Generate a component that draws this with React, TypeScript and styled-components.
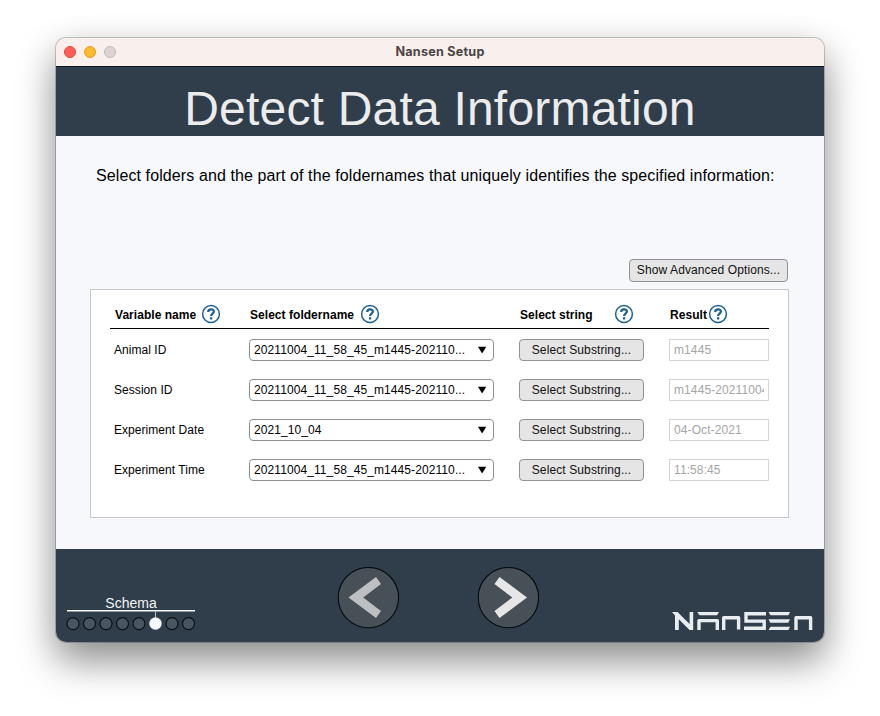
import React from "react";
import styled, { createGlobalStyle } from "styled-components";

const GlobalStyle = createGlobalStyle`
  * { box-sizing: border-box; }
  body {
    margin: 0;
    background: #fff;
    font-family: "Liberation Sans", Arial, sans-serif;
    color: #000;
  }
`;

const Desktop = styled.div`
  width: 880px;
  height: 716px;
  padding: 38px 56px 74px;
  overflow: hidden;
`;

const Window = styled.main`
  width: 768px;
  height: 604px;
  display: flex;
  flex-direction: column;
  border-radius: 10px;
  overflow: hidden;
  background: #f6f8fc;
  box-shadow: 0 0 0 1px rgba(0, 0, 0, 0.2), 0 20px 38px rgba(0, 0, 0, 0.38), 0 8px 36px rgba(0, 0, 0, 0.12);
`;

const TitleBar = styled.header`
  height: 29px;
  flex: none;
  display: grid;
  grid-template-columns: 100px 1fr 100px;
  align-items: center;
  padding: 0 8px;
  background: #f9f0ee;
  border-bottom: 1px solid #0b1220;
`;

const Lights = styled.div`
  display: flex;
  gap: 8px;
`;

const Light = styled.span<{ $fill: string; $edge: string }>`
  width: 12px;
  height: 12px;
  border-radius: 50%;
  background: ${(p) => p.$fill};
  border: 1px solid ${(p) => p.$edge};
`;

const WindowTitle = styled.div`
  font: bold 12.6px/16px Inter, sans-serif;
  letter-spacing: 0.24px;
  text-align: center;
  color: #494443;
`;

const Banner = styled.div`
  height: 69px;
  flex: none;
  background: #303e4b;
  text-align: center;
  padding-top: 14px;
`;

const Heading = styled.h1`
  margin: 0;
  font-size: 48px;
  font-weight: 400;
  line-height: 55px;
  letter-spacing: 0.2px;
  white-space: nowrap;
  color: #ececec;
`;

const Body = styled.section`
  height: 413px;
  flex: none;
  display: flex;
  flex-direction: column;
  padding: 30px 35px 0 34px;
`;

const Instruction = styled.p`
  margin: 0;
  height: 93px;
  padding-left: 6px;
  font-size: 16px;
  line-height: 19px;
  letter-spacing: 0.1px;
  white-space: nowrap;
`;

const Button = styled.button<{ $width: number; $height: number }>`
  width: ${(p) => p.$width}px;
  height: ${(p) => p.$height}px;
  padding: 0 0 ${(p) => (p.$height > 22 ? 2 : 0)}px;
  border: 1px solid #929294;
  border-radius: 4px;
  background: #e5e5e5;
  color: #111;
  font: 12px/18px "Liberation Sans", Arial, sans-serif;
  letter-spacing: 0.11px;
  white-space: nowrap;
`;

const Actions = styled.div`
  display: flex;
  justify-content: flex-end;
  padding-right: 1px;
`;

const Panel = styled.div`
  width: 699px;
  height: 229px;
  margin-top: 7px;
  padding: 10px 19px;
  border: 1px solid #c6c8cb;
  background: #fff;
`;

const columns = `
  display: grid;
  grid-template-columns: 139px 270px 150px 100px;
`;

const HeadRow = styled.div`
  ${columns}
  height: 29px;
  border-bottom: 1px solid #000;
`;

const HeadCell = styled.div<{ $inset: number; $label: number }>`
  display: grid;
  grid-template-columns: ${(p) => p.$label}px 20px;
  height: 28px;
  padding: 4px 0 0 ${(p) => p.$inset}px;
  font-size: 12px;
  line-height: 22px;
  font-weight: bold;
  letter-spacing: 0.04px;
  white-space: nowrap;
`;

const Rows = styled.div`
  display: grid;
  gap: 18px;
  padding-top: 10px;
`;

const Row = styled.div`
  ${columns}
  height: 22px;
  font-size: 12px;
  line-height: 22px;
  letter-spacing: 0.05px;
  white-space: nowrap;
`;

const Variable = styled.div`
  padding-left: 4px;
`;

const Select = styled.div`
  width: 245px;
  height: 22px;
  display: flex;
  justify-content: space-between;
  align-items: center;
  padding: 0 6px 0 4px;
  line-height: 20px;
  letter-spacing: 0.09px;
  border: 1px solid #8f9092;
  border-radius: 4px;
  background: #fff;
`;

const Result = styled.div`
  width: 100px;
  height: 22px;
  padding: 0 4px;
  border: 1px solid #d5d5d5;
  line-height: 20px;
  letter-spacing: 0.1px;
  color: #a5a5a5;
`;

const ResultText = styled.div`
  overflow: hidden;
`;

const Footer = styled.footer`
  flex: 1;
  display: grid;
  grid-template-columns: 281px 62px 78px 62px 1fr;
  background: #303e4b;
`;

const Progress = styled.div`
  width: 130px;
  margin: 46px 0 0 10px;
`;

const StepName = styled.div`
  height: 15px;
  width: 128px;
  margin-left: 1px;
  text-align: center;
  font-size: 14px;
  line-height: 17px;
  color: #f2f4f7;
`;

const NavButton = styled.button`
  width: 62px;
  height: 62px;
  margin-top: 18px;
  padding: 0;
  border: 0;
  background: none;

  svg { display: block; }
`;

const Brand = styled.div`
  justify-self: end;
  margin: 62px 10px 0 0;
  height: 20px;
`;

function Help() {
  return (
    <svg width="20" height="20" viewBox="0 0 20 20" fill="none" stroke="#1b6193">
      <circle cx="10" cy="10" r="8.4" strokeWidth="1.5" />
      <path d="M7.2 8C7.2 4.6 12.9 4.7 12.9 7.6C12.9 9.8 10.1 9.6 10.1 12.1" strokeWidth="2.2" />
      <path d="M10.1 13.2V15.5" strokeWidth="2.3" />
    </svg>
  );
}

function Caret() {
  return (
    <svg width="10" height="8" viewBox="0 0 10 8">
      <path d="M1 .8H9.2L5.1 7.6Z" fill="#000" />
    </svg>
  );
}

function Arrow({ next }: { next?: boolean }) {
  return (
    <svg width="62" height="62" viewBox="0 0 62 62">
      <circle cx="31.4" cy="30.6" r="30.2" fill="#485057" stroke="#050a0d" strokeWidth="1.1" />
      {next ? (
        <path d="M22.5 10L50 30.6L22.5 51L17.5 44L35.3 30.6L17.5 17Z" fill="#e6e6e6" />
      ) : (
        <path d="M39 10L11.5 30.6L39 51L44 44L26.2 30.6L44 17Z" fill="#bebfc0" />
      )}
    </svg>
  );
}

function Steps({ count, current }: { count: number; current: number }) {
  return (
    <svg width="130" height="22" viewBox="0 0 130 22" display="block">
      <path d="M1 .7H129" stroke="#f6f8fc" strokeWidth="1.5" />
      <path d={`M${7 + current * 16.5} 1V9`} stroke="#b5bdc5" strokeWidth="1" />
      {Array.from({ length: count }, (_, i) => (
        <circle
          key={i}
          cx={7 + i * 16.5}
          cy="13.6"
          r="6"
          fill={i === current ? "#f6f8fc" : "#485562"}
          stroke={i === current ? "#f6f8fc" : "#0a1016"}
          strokeWidth={i === current ? 0.4 : 1.2}
        />
      ))}
    </svg>
  );
}

function Logo() {
  return (
    <svg width="142" height="20" viewBox="0 0 142 20" role="img" aria-label="Nansen" fill="none" stroke="#e9edf0" strokeWidth="3.4">
      <path d="M0 1H5.5L17.6 13V1H21.2V19H17.6L6.8 8.2V19H3V4.5Z" fill="#e9edf0" stroke="none" />
      <path d="M25.2 1H47L45 4.3H27.5Z" fill="#e9edf0" stroke="none" />
      <path d="M27 19V9.6H45.3V19M51.7 19V6.8H66.6V18.5" strokeLinejoin="round" />
      <path d="M94 2.7H74V10.1H92.2V17.3H72" />
      <path d="M96.5 1H118L116.4 4.3H98.5Z M96.5 8.3H118L116.2 11.8H98.3Z M98.5 15.7H118L116.4 19H96.5Z" fill="#e9edf0" stroke="none" />
      <path d="M124 19V6.8H138.6V19" strokeLinejoin="round" />
    </svg>
  );
}

const headings = [
  { text: "Variable name", inset: 5, label: 86 },
  { text: "Select foldername", inset: 1, label: 110 },
  { text: "Select string", inset: 1, label: 94 },
  { text: "Result", inset: 1, label: 38 },
];

const LONG_FOLDER = "20211004_11_58_45_m1445-202110...";

const variables = [
  { name: "Animal ID", folder: LONG_FOLDER, result: "m1445" },
  { name: "Session ID", folder: LONG_FOLDER, result: "m1445-20211004" },
  { name: "Experiment Date", folder: "2021_10_04", result: "04-Oct-2021" },
  { name: "Experiment Time", folder: LONG_FOLDER, result: "11:58:45" },
];

export default function App() {
  return (
    <Desktop>
      <GlobalStyle />
      <Window>
        <TitleBar>
          <Lights>
            <Light $fill="#ff5d55" $edge="#e2443f" />
            <Light $fill="#febb2d" $edge="#dfa023" />
            <Light $fill="#ddd4d3" $edge="#c2b8b7" />
          </Lights>
          <WindowTitle>Nansen Setup</WindowTitle>
        </TitleBar>
        <Banner>
          <Heading>Detect Data Information</Heading>
        </Banner>
        <Body>
          <Instruction>
            Select folders and the part of the foldernames that uniquely identifies the specified information:
          </Instruction>
          <Actions>
            <Button $width={159} $height={23}>Show Advanced Options...</Button>
          </Actions>
          <Panel>
            <HeadRow>
              {headings.map((h) => (
                <HeadCell key={h.text} $inset={h.inset} $label={h.label}>
                  {h.text}
                  <Help />
                </HeadCell>
              ))}
            </HeadRow>
            <Rows>
              {variables.map((v) => (
                <Row key={v.name}>
                  <Variable>{v.name}</Variable>
                  <Select>
                    {v.folder}
                    <Caret />
                  </Select>
                  <Button $width={125} $height={22}>Select Substring...</Button>
                  <Result>
                    <ResultText>{v.result}</ResultText>
                  </Result>
                </Row>
              ))}
            </Rows>
          </Panel>
        </Body>
        <Footer>
          <Progress>
            <StepName>Schema</StepName>
            <Steps count={8} current={5} />
          </Progress>
          <NavButton aria-label="Previous">
            <Arrow />
          </NavButton>
          <span />
          <NavButton aria-label="Next">
            <Arrow next />
          </NavButton>
          <Brand>
            <Logo />
          </Brand>
        </Footer>
      </Window>
    </Desktop>
  );
}
